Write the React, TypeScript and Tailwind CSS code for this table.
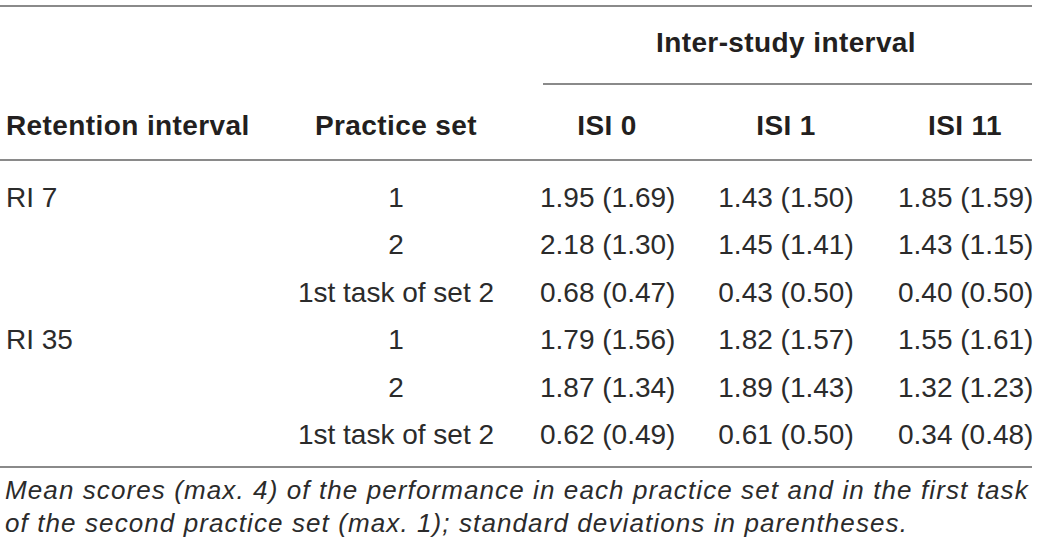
const rows = [
  { ri: 'RI 7', set: '1', vals: ['1.95 (1.69)', '1.43 (1.50)', '1.85 (1.59)'] },
  { ri: '', set: '2', vals: ['2.18 (1.30)', '1.45 (1.41)', '1.43 (1.15)'] },
  { ri: '', set: '1st task of set 2', vals: ['0.68 (0.47)', '0.43 (0.50)', '0.40 (0.50)'] },
  { ri: 'RI 35', set: '1', vals: ['1.79 (1.56)', '1.82 (1.57)', '1.55 (1.61)'] },
  { ri: '', set: '2', vals: ['1.87 (1.34)', '1.89 (1.43)', '1.32 (1.23)'] },
  { ri: '', set: '1st task of set 2', vals: ['0.62 (0.49)', '0.61 (0.50)', '0.34 (0.48)'] },
];

const cols = 'grid grid-cols-[252px_288px_134px_224px_134px]';

export default function App() {
  return (
    <div className="w-[1040px] h-[552px] bg-white text-[#231f20] font-['Liberation_Sans',Arial,sans-serif] overflow-hidden">
      <div className="w-[1032px] pt-[5px]">
        {/* top rule */}
        <div className="h-[2px] bg-[#8a8a8a]" />

        {/* spanning header */}
        <div className={`${cols} pt-[12px] h-[76px]`}>
          <div className="col-span-2" />
          <div className="col-span-3 text-center font-bold text-[28px] tracking-[0.4px] leading-[47px]">Inter-study interval</div>
        </div>
        <div className="ml-[543px] h-[2px] bg-[#8a8a8a]" />

        {/* column headers */}
        <div className={`${cols} pt-[17px] h-[74px] font-bold text-[28px] tracking-[0.4px] leading-[47px]`}>
          <div className="pl-[6px] whitespace-nowrap">Retention interval</div>
          <div className="text-center">Practice set</div>
          <div className="text-center">ISI 0</div>
          <div className="text-center">ISI 1</div>
          <div className="text-center">ISI 11</div>
        </div>
        <div className="h-[2px] bg-[#8a8a8a]" />

        {/* body */}
        <div className="pt-[13px] pb-[8px] text-[28px] leading-[47.4px] text-[#2b2b2b]">
          {rows.map((r, i) => (
            <div key={i} className={cols}>
              <div className="pl-[6px] whitespace-nowrap">{r.ri}</div>
              <div className="text-center whitespace-nowrap">{r.set}</div>
              {r.vals.map((v, j) => (
                <div key={j} className="text-center whitespace-nowrap">{v}</div>
              ))}
            </div>
          ))}
        </div>
        <div className="h-[2px] bg-[#8a8a8a]" />

        {/* caption */}
        <p className="pt-[6px] pl-[5px] italic text-[26px] tracking-[1.1px] leading-[33px] text-[#2b2b2b] whitespace-nowrap">
          Mean scores (max. 4) of the performance in each practice set and in the first task
          <br />
          of the second practice set (max. 1); standard deviations in parentheses.
        </p>
      </div>
    </div>
  );
}
